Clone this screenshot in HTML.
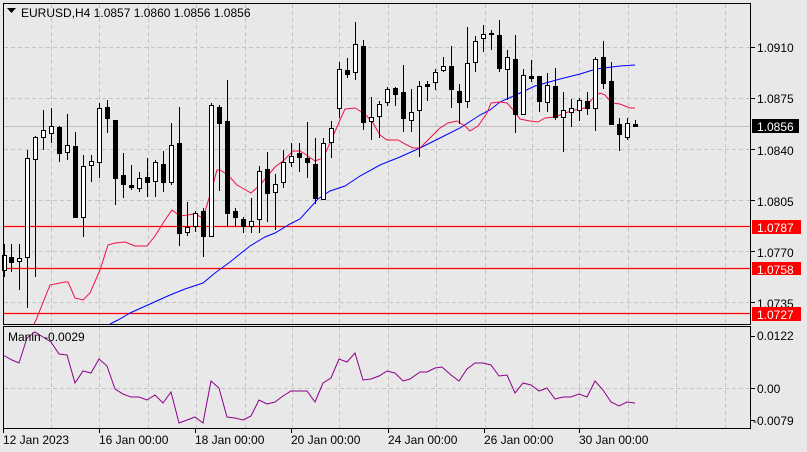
<!DOCTYPE html>
<html><head><meta charset="utf-8"><style>
html,body{margin:0;padding:0;background:#e8e8e8;width:807px;height:452px;overflow:hidden}
svg{display:block}
text{font-family:"Liberation Sans",sans-serif;font-size:12px;fill:#000}
</style></head><body>
<svg width="807" height="452" viewBox="0 0 807 452" xmlns="http://www.w3.org/2000/svg">
<rect width="807" height="452" fill="#e8e8e8"/>
<g stroke="#c4c4c4" stroke-dasharray="4,3" stroke-width="1">
<path d="M51.5 4V324M99.5 4V324M148.5 4V324M196.5 4V324M245.5 4V324M292.5 4V324M339.5 4V324M388.5 4V324M436.5 4V324M485.5 4V324M532.5 4V324M579.5 4V324M628.5 4V324M676.5 4V324M725.5 4V324"/>
<path d="M51.5 327V428M99.5 327V428M148.5 327V428M196.5 327V428M245.5 327V428M292.5 327V428M339.5 327V428M388.5 327V428M436.5 327V428M485.5 327V428M532.5 327V428M579.5 327V428M628.5 327V428M676.5 327V428M725.5 327V428"/>
<path d="M4 47.5H750M4 98.5H750M4 149.5H750M4 200.5H750M4 251.5H750M4 302.5H750M4 388.5H750"/>
</g>
<path d="M4 126.5H750" stroke="#c0c0c0"/>
<g stroke="#ff0000" stroke-width="1.2"><path d="M4 226.5H750M4 268.5H750M4 313.5H750"/></g>
<polyline fill="none" stroke="#0000ff" stroke-width="1" points="110,324 118,320 130,313 150,304 170,295 185,289 203,283 215,273 230,262 250,246 265,237 275,233 290,224 300,219 318,199 330,191 345,186 360,176 380,165 400,157 420,148 440,138 460,128 480,115 490,110 500,102 520,93 535,86 560,79 580,74 596,69 620,66 635,65"/>
<polyline fill="none" stroke="#ee1144" stroke-width="1" points="34,324 36,320 50,285 65,282 68,282 75,298 83,300 90,293 100,270 108,245 115,243 125,242 135,246 147,246 155,236 165,220 172,210 180,216 195,214 203,218 210,195 217,170 220,170 228,175 237,185 244,189 251,193 260,185 275,167 283,161 293,151 300,151 305,154 315,161 323,158 330,143 340,120 345,109 355,108 365,114 373,123 380,135 387,140 398,140 407,145 413,148 420,148 428,140 440,128 448,123 457,121 465,126 470,131 478,126 487,113 491,103 500,102 507,103 515,112 520,119 530,121 538,122 545,118 555,117 565,113 575,110 585,108 593,98 600,93 605,95 612,103 620,104 630,108 635,108"/>
<g stroke="#000" stroke-width="1" id="c">
<path d="M4.5 244V277M11.5 244V272M19.5 244V290M27.5 150V308M35.5 136V277M43.5 110V150M51.5 108V143M59.5 126V162M67.5 114V160M75.5 132V218M83.5 155V237M91.5 155V182M99.5 103V178M107.5 100V133M115.5 120V205M123.5 153V198M131.5 165V190M139.5 172V192M147.5 158V197M155.5 160V197M163.5 151V192M171.5 123V185M179.5 107V246M187.5 202V236M195.5 211V232M203.5 208V257M211.5 103V237M219.5 105V191M227.5 80V227M235.5 208V227M243.5 217V233M251.5 198V233M259.5 166V233M267.5 152V222M275.5 174V230M283.5 150V188M291.5 143V167M299.5 143V172M307.5 122V178M315.5 138V204M323.5 138V200M331.5 121V158M339.5 62V118M347.5 58V78M355.5 22V80M363.5 40V130M371.5 97V140M379.5 101V138M387.5 87V106M395.5 87V106M403.5 65V132M411.5 89V132M419.5 81V157M427.5 81V101M435.5 69V90M443.5 57V72M451.5 46V108M459.5 84V124M467.5 27V108M475.5 36V72M483.5 25V52M491.5 30V50M499.5 20V72M507.5 50V100M515.5 35V133M523.5 69V115M531.5 60V82M539.5 76V112M547.5 73V112M555.5 68V120M563.5 92V152M571.5 99V127M579.5 98V121M587.5 92V115M595.5 57V131M603.5 41V89M611.5 62V125M619.5 118V151M627.5 118V140M635.5 120V127"/>
</g>
<g stroke="#000" stroke-width="1">
<rect x="2.5" y="255.5" width="4" height="15" fill="#fff"/>
<rect x="9.5" y="257.5" width="4" height="5" fill="#000"/>
<rect x="17.5" y="258.5" width="4" height="3" fill="#fff"/>
<rect x="25.5" y="158.5" width="4" height="99" fill="#fff"/>
<rect x="33.5" y="137.5" width="4" height="22" fill="#fff"/>
<rect x="41.5" y="130.5" width="4" height="7" fill="#fff"/>
<rect x="49.5" y="126.5" width="4" height="7" fill="#fff"/>
<rect x="57.5" y="127.5" width="4" height="26" fill="#000"/>
<rect x="65.5" y="145.5" width="4" height="7" fill="#fff"/>
<rect x="73.5" y="146.5" width="4" height="71" fill="#000"/>
<rect x="81.5" y="166.5" width="4" height="51" fill="#fff"/>
<rect x="89.5" y="161.5" width="4" height="4" fill="#fff"/>
<rect x="97.5" y="108.5" width="4" height="54" fill="#fff"/>
<rect x="105.5" y="107.5" width="4" height="11" fill="#000"/>
<rect x="113.5" y="120.5" width="4" height="58" fill="#000"/>
<rect x="121.5" y="175.5" width="4" height="9" fill="#000"/>
<rect x="129.5" y="185.5" width="4" height="2" fill="#000"/>
<rect x="137.5" y="178.5" width="4" height="10" fill="#fff"/>
<rect x="145.5" y="177.5" width="4" height="5" fill="#000"/>
<rect x="153.5" y="162.5" width="4" height="19" fill="#fff"/>
<rect x="161.5" y="164.5" width="4" height="18" fill="#000"/>
<rect x="169.5" y="145.5" width="4" height="37" fill="#fff"/>
<rect x="177.5" y="143.5" width="4" height="90" fill="#000"/>
<rect x="185.5" y="227.5" width="4" height="5" fill="#fff"/>
<rect x="193.5" y="213.5" width="4" height="13" fill="#fff"/>
<rect x="201.5" y="211.5" width="4" height="25" fill="#000"/>
<rect x="209.5" y="105.5" width="4" height="131" fill="#fff"/>
<rect x="217.5" y="107.5" width="4" height="16" fill="#000"/>
<rect x="225.5" y="121.5" width="4" height="92" fill="#000"/>
<rect x="233.5" y="211.5" width="4" height="6" fill="#000"/>
<rect x="241.5" y="219.5" width="4" height="7" fill="#000"/>
<rect x="249.5" y="221.5" width="4" height="5" fill="#fff"/>
<rect x="257.5" y="171.5" width="4" height="48" fill="#fff"/>
<rect x="265.5" y="169.5" width="4" height="24" fill="#000"/>
<rect x="273.5" y="184.5" width="4" height="8" fill="#fff"/>
<rect x="281.5" y="162.5" width="4" height="20" fill="#fff"/>
<rect x="289.5" y="156.5" width="4" height="6" fill="#fff"/>
<rect x="297.5" y="153.5" width="4" height="4" fill="#000"/>
<rect x="305.5" y="158.5" width="4" height="4" fill="#000"/>
<rect x="313.5" y="164.5" width="4" height="34" fill="#000"/>
<rect x="321.5" y="143.5" width="4" height="56" fill="#fff"/>
<rect x="329.5" y="128.5" width="4" height="14" fill="#fff"/>
<rect x="337.5" y="69.5" width="4" height="39" fill="#fff"/>
<rect x="345.5" y="70.5" width="4" height="4" fill="#000"/>
<rect x="353.5" y="44.5" width="4" height="28" fill="#fff"/>
<rect x="361.5" y="46.5" width="4" height="76" fill="#000"/>
<rect x="369.5" y="117.5" width="4" height="4" fill="#fff"/>
<rect x="377.5" y="104.5" width="4" height="12" fill="#fff"/>
<rect x="385.5" y="89.5" width="4" height="13" fill="#fff"/>
<rect x="393.5" y="88.5" width="4" height="6" fill="#000"/>
<rect x="401.5" y="92.5" width="4" height="26" fill="#000"/>
<rect x="409.5" y="112.5" width="4" height="8" fill="#fff"/>
<rect x="417.5" y="86.5" width="4" height="24" fill="#fff"/>
<rect x="425.5" y="84.5" width="4" height="2" fill="#000"/>
<rect x="433.5" y="72.5" width="4" height="10" fill="#fff"/>
<rect x="441.5" y="66.5" width="4" height="4" fill="#fff"/>
<rect x="449.5" y="66.5" width="4" height="23" fill="#000"/>
<rect x="457.5" y="91.5" width="4" height="11" fill="#000"/>
<rect x="465.5" y="63.5" width="4" height="38" fill="#fff"/>
<rect x="473.5" y="41.5" width="4" height="21" fill="#fff"/>
<rect x="481.5" y="34.5" width="4" height="4" fill="#fff"/>
<rect x="489.5" y="33.5" width="4" height="1" fill="#000"/>
<rect x="497.5" y="35.5" width="4" height="33" fill="#000"/>
<rect x="505.5" y="57.5" width="4" height="12" fill="#fff"/>
<rect x="513.5" y="59.5" width="4" height="55" fill="#000"/>
<rect x="521.5" y="75.5" width="4" height="39" fill="#fff"/>
<rect x="529.5" y="76.5" width="4" height="2" fill="#000"/>
<rect x="537.5" y="76.5" width="4" height="25" fill="#000"/>
<rect x="545.5" y="85.5" width="4" height="17" fill="#fff"/>
<rect x="553.5" y="86.5" width="4" height="31" fill="#000"/>
<rect x="561.5" y="110.5" width="4" height="7" fill="#fff"/>
<rect x="569.5" y="108.5" width="4" height="4" fill="#fff"/>
<rect x="577.5" y="100.5" width="4" height="10" fill="#fff"/>
<rect x="585.5" y="101.5" width="4" height="7" fill="#000"/>
<rect x="593.5" y="59.5" width="4" height="49" fill="#fff"/>
<rect x="601.5" y="57.5" width="4" height="26" fill="#000"/>
<rect x="609.5" y="81.5" width="4" height="43" fill="#000"/>
<rect x="617.5" y="124.5" width="4" height="10" fill="#000"/>
<rect x="625.5" y="123.5" width="4" height="14" fill="#fff"/>
<rect x="633.5" y="124.5" width="4" height="2" fill="#000"/>
</g>
<polyline fill="none" stroke="#8b008b" stroke-width="1" points="3,355 12,360 19,363 27,338 35,332 43,337 51,342 59,354 67,355 75,383 83,371 91,373 99,359 107,366 115,389 123,394 131,397 139,397 147,400 155,395 163,403 171,392 179,423 187,420 195,417 203,423 211,381 219,388 227,417 235,418 243,420 251,416 259,400 267,404 275,402 283,396 291,391 299,391 307,391 315,402 323,383 331,378 339,359 347,362 355,353 363,380 371,379 379,376 387,371 395,373 403,381 410,379 420,372 427,372 435,368 442,367 451,375 459,381 467,369 475,363 483,363 491,365 499,376 507,375 515,393 523,383 531,385 539,391 547,388 555,399 563,397 571,397 579,394 587,397 595,381 603,390 611,402 619,406 627,402 635,403"/>
<rect x="3.5" y="3.5" width="747" height="321" fill="none" stroke="#000"/>
<rect x="3.5" y="326.5" width="747" height="102" fill="none" stroke="#000"/>
<g stroke="#000"><path d="M751 47.5h4M751 98.5h4M751 149.5h4M751 200.5h4M751 251.5h4M751 302.5h4M751 336.5h4M751 388.5h4M751 420.5h4M3.5 429v4M99.5 429v4M195.5 429v4M291.5 429v4M388.5 429v4M484.5 429v4M579.5 429v4"/></g>
<path d="M7 8h9l-4.5 5z" fill="#000"/>
<text x="21" y="17">EURUSD,H4  1.0857 1.0860 1.0856 1.0856</text>
<text x="8" y="341">Manin -0.0029</text>
<g>
<text x="757" y="52">1.0910</text>
<text x="757" y="103">1.0875</text>
<text x="757" y="155">1.0840</text>
<text x="757" y="206">1.0805</text>
<text x="757" y="257">1.0770</text>
<text x="757" y="308">1.0735</text>
<text x="757" y="340">0.0122</text>
<text x="757" y="393">0.00</text>
<text x="753" y="425">-0.0079</text>
</g>
<rect x="752" y="119" width="47" height="14" fill="#000"/>
<text x="757" y="131" style="fill:#fff">1.0856</text>
<rect x="752" y="220" width="49" height="14" fill="#ff0000"/>
<text x="757" y="232" style="fill:#fff">1.0787</text>
<rect x="752" y="262" width="49" height="13" fill="#ff0000"/>
<text x="757" y="274" style="fill:#fff">1.0758</text>
<rect x="752" y="307" width="49" height="14" fill="#ff0000"/>
<text x="757" y="319" style="fill:#fff">1.0727</text>
<g>
<text x="3" y="444">12 Jan 2023</text>
<text x="99" y="444">16 Jan 00:00</text>
<text x="195" y="444">18 Jan 00:00</text>
<text x="291" y="444">20 Jan 00:00</text>
<text x="388" y="444">24 Jan 00:00</text>
<text x="484" y="444">26 Jan 00:00</text>
<text x="579" y="444">30 Jan 00:00</text>
</g>
</svg>
</body></html>
